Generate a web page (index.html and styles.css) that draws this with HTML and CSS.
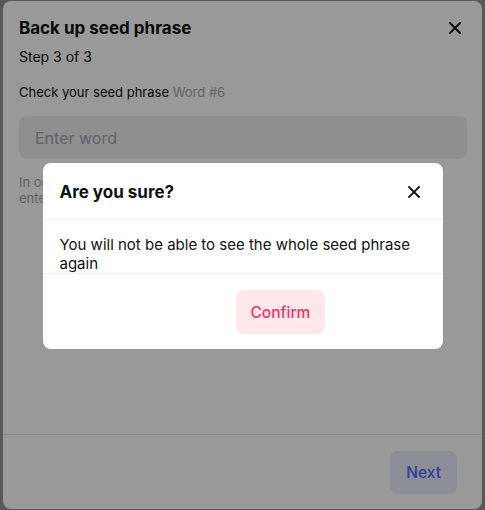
FILE: index.html
```html
<!DOCTYPE html>
<html lang="en">
<head>
<meta charset="utf-8">
<title>Back up seed phrase</title>
<link rel="stylesheet" href="styles.css">
</head>
<body>
<div class="card">
  <div class="card-main">
    <div class="card-header">
      <h1 class="title">Back up seed phrase</h1>
      <button class="icon-btn" aria-label="Close">
        <svg width="12" height="12" viewBox="0 0 12 12"><path d="M1 1L11 11M11 1L1 11" stroke="#111" stroke-width="1.9" stroke-linecap="square"/></svg>
      </button>
    </div>
    <p class="step">Step 3 of 3</p>
    <p class="label">Check your seed phrase <span class="muted">Word #6</span></p>
    <input class="word-input" type="text" placeholder="Enter word">
    <p class="helper">In order to make sure you saved your seed phrase correctly,<br>enter the word by its number in the phrase.</p>
  </div>
  <div class="card-footer">
    <button class="btn btn-primary">Next</button>
  </div>
</div>

<div class="overlay">
  <div class="modal">
    <div class="modal-header">
      <h2 class="modal-title">Are you sure?</h2>
      <button class="icon-btn" aria-label="Close">
        <svg width="12" height="12" viewBox="0 0 12 12"><path d="M1 1L11 11M11 1L1 11" stroke="#111" stroke-width="1.9" stroke-linecap="square"/></svg>
      </button>
    </div>
    <div class="modal-body">You will not be able to see the whole seed phrase again</div>
    <div class="modal-footer">
      <button class="btn btn-danger">Confirm</button>
    </div>
  </div>
</div>
</body>
</html>
```

FILE: styles.css
```css
* { box-sizing: border-box; }

html, body {
  margin: 0;
  height: 100%;
}

body {
  background: #949494;
  padding: 1px 3px 1px 3px;
  font-family: Inter, "Noto Sans", sans-serif;
  color: #111;
}

.card {
  background: #fff;
  border-radius: 8px;
  height: 508px;
  display: flex;
  flex-direction: column;
}

.card-main {
  flex: 1;
  padding: 15px 15px 0 16px;
}

.card-header {
  display: flex;
  align-items: center;
  justify-content: space-between;
}

.title {
  margin: 0;
  font-size: 17px;
  font-weight: 700;
  line-height: 24px;
}

.icon-btn {
  border: 0;
  background: none;
  padding: 0;
  width: 24px;
  height: 24px;
  display: flex;
  align-items: center;
  justify-content: center;
  cursor: pointer;
}

.step {
  margin: 7px 0 0;
  font-size: 14px;
  line-height: 20px;
}

.label {
  margin: 15px 0 0;
  font-size: 13px;
  line-height: 20px;
}

.muted {
  color: #a3a6ad;
}

.word-input {
  display: block;
  width: 100%;
  height: 43px;
  margin-top: 14px;
  border: 0;
  border-radius: 8px;
  background: #eeeff1;
  padding: 0 16px;
  font-family: inherit;
  font-size: 16px;
  color: #111;
  outline: none;
}

.word-input::placeholder {
  color: #a0a4ab;
}

.helper {
  margin: 15px 0 0;
  font-size: 13px;
  line-height: 16px;
  color: #a0a4ab;
}

.card-footer {
  border-top: 1px solid #e6e8ec;
  padding: 16px 25px 15px;
  display: flex;
  justify-content: flex-end;
}

.btn {
  border: 0;
  border-radius: 8px;
  height: 43px;
  padding: 0 16px;
  font-family: inherit;
  font-size: 15.5px;
  font-weight: 500;
  cursor: pointer;
}

.btn-primary {
  background: #e9ebfc;
  color: #5767ff;
}

.btn-danger {
  background: #ffe8ec;
  color: #f2316a;
  height: 44px;
  padding: 0 15px;
}

.overlay {
  position: fixed;
  inset: 0;
  padding-top: 2px;
  background: rgba(0, 0, 0, 0.4);
  display: flex;
  align-items: center;
  justify-content: center;
}

.modal {
  width: 400px;
  background: #fff;
  border-radius: 8px;
}

.modal-header {
  display: flex;
  align-items: center;
  justify-content: space-between;
  padding: 17px 17px 15px 17px;
  border-bottom: 1px solid #edf0f3;
}

.modal-title {
  margin: 0;
  font-size: 17px;
  font-weight: 700;
  line-height: 24px;
}

.modal-body {
  padding: 15px 17px 0;
  font-size: 15px;
  line-height: 19px;
  border-bottom: 1px solid #edf0f3;
}

.modal-footer {
  padding: 16px 0 15px 193px;
  display: flex;
}
```
